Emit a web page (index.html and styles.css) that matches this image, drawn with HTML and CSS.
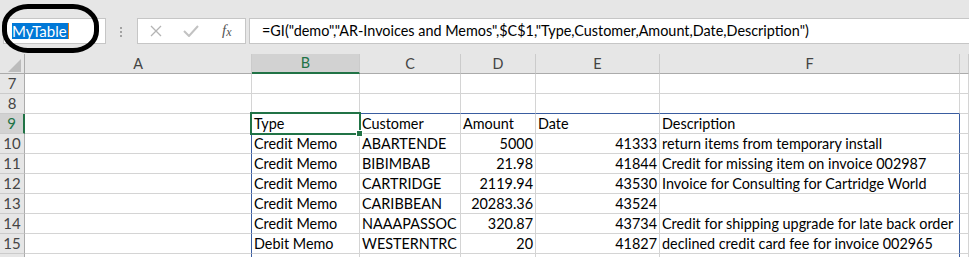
FILE: index.html
```html
<!DOCTYPE html>
<html lang="en">
<head>
    <meta charset="UTF-8">
    <meta name="viewport" content="width=device-width, initial-scale=1.0">
    <title>MyTable</title>
    <link rel="stylesheet" href="styles.css">
</head>
<body>
    <div class="formula-bar">
        <div class="name-box"><span class="name-sel">MyTable</span><span class="caret"></span></div>
        <div class="grip"><i></i><i></i><i></i></div>
        <div class="fn-buttons">
            <svg class="icon-cancel" width="12" height="12" viewBox="0 0 12 12">
                <path d="M1 1 L11 11 M11 1 L1 11" stroke="#b4b4b4" stroke-width="1.3" fill="none"/>
            </svg>
            <svg class="icon-enter" width="16" height="12" viewBox="0 0 16 12">
                <path d="M1 6 L6 11 L15 1" stroke="#c2c2c2" stroke-width="2" fill="none"/>
            </svg>
            <span class="fx">f<i>x</i></span>
        </div>
        <div class="formula">=GI("demo","AR-Invoices and Memos",$C$1,"Type,Customer,Amount,Date,Description")</div>
    </div>

    <!-- hand drawn marker round the name box -->
    <div class="marker"></div>

    <div class="sheet">
        <div class="corner">
            <svg width="13" height="13" viewBox="0 0 13 13"><path d="M13 0 L13 13 L0 13 Z" fill="#bcbcbc"/></svg>
        </div>
        <div class="col-head">A</div>
        <div class="col-head sel">B</div>
        <div class="col-head">C</div>
        <div class="col-head">D</div>
        <div class="col-head">E</div>
        <div class="col-head">F</div>
        <div class="col-head"></div>

        <div class="rh">7</div>
        <div class="cell"></div><div class="cell"></div><div class="cell"></div><div class="cell"></div><div class="cell"></div><div class="cell"></div><div class="cell"></div>

        <div class="rh">8</div>
        <div class="cell"></div><div class="cell tb-top"></div><div class="cell tb-top"></div><div class="cell tb-top"></div><div class="cell tb-top"></div><div class="cell tb-top"></div><div class="cell"></div>

        <div class="rh sel">9</div>
        <div class="cell tb-left"></div>
        <div class="cell active">Type</div>
        <div class="cell">Customer</div>
        <div class="cell">Amount</div>
        <div class="cell">Date</div>
        <div class="cell tb-right">Description</div>
        <div class="cell"></div>

        <div class="rh">10</div>
        <div class="cell tb-left"></div>
        <div class="cell">Credit Memo</div>
        <div class="cell">ABARTENDE</div>
        <div class="cell num">5000</div>
        <div class="cell num">41333</div>
        <div class="cell tb-right">return items from temporary install</div>
        <div class="cell"></div>

        <div class="rh">11</div>
        <div class="cell tb-left"></div>
        <div class="cell">Credit Memo</div>
        <div class="cell">BIBIMBAB</div>
        <div class="cell num">21.98</div>
        <div class="cell num">41844</div>
        <div class="cell tb-right">Credit for missing item on invoice 002987</div>
        <div class="cell"></div>

        <div class="rh">12</div>
        <div class="cell tb-left"></div>
        <div class="cell">Credit Memo</div>
        <div class="cell">CARTRIDGE</div>
        <div class="cell num">2119.94</div>
        <div class="cell num">43530</div>
        <div class="cell tb-right">Invoice for Consulting for Cartridge World</div>
        <div class="cell"></div>

        <div class="rh">13</div>
        <div class="cell tb-left"></div>
        <div class="cell">Credit Memo</div>
        <div class="cell">CARIBBEAN</div>
        <div class="cell num">20283.36</div>
        <div class="cell num">43524</div>
        <div class="cell tb-right"></div>
        <div class="cell"></div>

        <div class="rh">14</div>
        <div class="cell tb-left"></div>
        <div class="cell">Credit Memo</div>
        <div class="cell">NAAAPASSOC</div>
        <div class="cell num">320.87</div>
        <div class="cell num">43734</div>
        <div class="cell tb-right">Credit for shipping upgrade for late back order</div>
        <div class="cell"></div>

        <div class="rh">15</div>
        <div class="cell tb-left"></div>
        <div class="cell">Debit Memo</div>
        <div class="cell">WESTERNTRC</div>
        <div class="cell num">20</div>
        <div class="cell num">41827</div>
        <div class="cell tb-right">declined credit card fee for invoice 002965</div>
        <div class="cell"></div>

        <div class="rh"></div>
        <div class="cell tb-left"></div><div class="cell"></div><div class="cell"></div><div class="cell"></div><div class="cell"></div><div class="cell tb-right"></div><div class="cell"></div>
    </div>
</body>
</html>
```

FILE: styles.css
```css
html, body {
    height: 257px;
    overflow: hidden;
}

body {
    margin: 0;
    background-color: #ffffff;
    font-family: Lato, "Liberation Sans", sans-serif;
    font-size: 14.4px;
    color: #000;
}

.formula-bar {
    display: flex;
    align-items: flex-start;
    height: 54px;
    padding-top: 18px;
    box-sizing: border-box;
    background-color: #e6e6e6;
}

.name-box {
    width: 103px;
    height: 26px;
    margin-left: 3px;
    padding: 4px 0 0 8px;
    box-sizing: border-box;
    background-color: #fff;
    border: 1px solid #c6c6c6;
    display: flex;
}

.name-sel {
    display: inline-block;
    height: 16px;
    line-height: 16px;
    padding-right: 1px;
    background-color: #0078d7;
    color: #fff;
    font-size: 15px;
}

.caret {
    display: inline-block;
    width: 1px;
    height: 16px;
    background-color: #e0801e;
}

.grip {
    width: 31px;
    padding: 9px 0 0 14px;
    box-sizing: border-box;
    display: flex;
    flex-direction: column;
    gap: 2px;
}

.grip i {
    display: block;
    width: 2px;
    height: 2px;
    background-color: #a2a2a2;
}

.fn-buttons {
    width: 109px;
    height: 26px;
    box-sizing: border-box;
    background-color: #fff;
    border: 1px solid #c6c6c6;
    display: flex;
    align-items: center;
    padding-left: 12px;
}

.icon-enter {
    margin-left: 21px;
}

.fx {
    margin-left: 23px;
    font-family: "Liberation Serif", serif;
    font-style: italic;
    font-size: 15px;
    color: #555;
    margin-top: -2px;
}

.fx i {
    font-size: 12px;
    position: relative;
    top: 1px;
}

.formula {
    flex: 1;
    height: 26px;
    margin-left: 3px;
    margin-right: -1px;
    padding-left: 12px;
    box-sizing: border-box;
    background-color: #fff;
    border: 1px solid #c6c6c6;
    line-height: 24px;
    white-space: nowrap;
}

.marker {
    position: absolute;
    left: 2px;
    top: 4px;
    width: 97px;
    height: 49px;
    box-sizing: border-box;
    border: 5px solid #000;
    border-radius: 26px / 22px;
}

.sheet {
    display: grid;
    grid-template-columns: 25px 227px 108px 101px 75px 124px 300px 1fr;
    grid-auto-rows: 20px;
    height: 203px;
    overflow: hidden;
}

.corner,
.col-head,
.rh,
.cell {
    box-sizing: border-box;
    white-space: nowrap;
    line-height: 19px;
}

.corner {
    background-color: #e6e6e6;
    border-right: 1px solid #ababab;
    border-bottom: 1px solid #ababab;
    padding: 3px 0 0 8px;
}

.col-head {
    background-color: #e6e6e6;
    border-right: 1px solid #cbcbcb;
    border-bottom: 1px solid #ababab;
    text-align: center;
    color: #444;
}

.col-head.sel {
    background-color: #d2d2d2;
    border-bottom: 2px solid #217346;
    color: #217346;
    line-height: 18px;
}

.rh {
    background-color: #e6e6e6;
    border-right: 1px solid #ababab;
    border-bottom: 1px solid #cbcbcb;
    text-align: center;
    color: #444;
    font-size: 15px;
}

.rh.sel {
    background-color: #d2d2d2;
    border-right: 2px solid #217346;
    color: #217346;
}

.cell {
    border-right: 1px solid #d4d4d4;
    border-bottom: 1px solid #d4d4d4;
    padding: 0 2px;
    overflow: hidden;
}

.num {
    text-align: right;
}

.tb-left {
    border-right-color: #3a5da0;
}

.tb-top {
    border-bottom-color: #3a5da0;
}

.tb-right {
    border-right-color: #3a5da0;
}

.active {
    position: relative;
    overflow: visible;
}

.active::after {
    content: '';
    position: absolute;
    left: -2px;
    top: -2px;
    right: -2px;
    bottom: -2px;
    border: 2px solid #217346;
}

.active::before {
    content: '';
    position: absolute;
    right: -4px;
    bottom: -4px;
    width: 5px;
    height: 5px;
    background-color: #217346;
    border: 1px solid #fff;
    z-index: 1;
}
```
